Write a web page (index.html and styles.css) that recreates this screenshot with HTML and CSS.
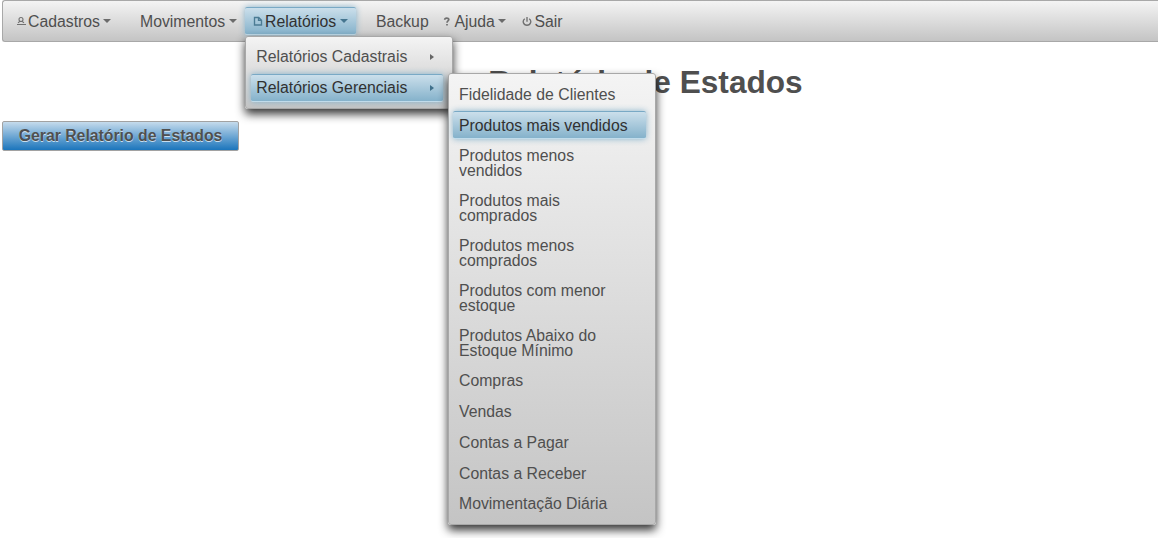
FILE: index.html
```html
<!DOCTYPE html>
<html lang="pt-BR">
<head>
<meta charset="utf-8">
<title>Relatório de Estados</title>
<link rel="stylesheet" href="styles.css">
</head>
<body>
<nav class="menubar">
  <a class="item cadastros"><svg class="icon" viewBox="0 0 10 10"><circle cx="5" cy="3.500" r="2"/><path d="M4 5.400L2 6.800M6 5.400L8 6.800M1 8.500h9"/></svg>Cadastros<i class="caret"></i></a>
  <a class="item movimentos">Movimentos<i class="caret"></i></a>
  <div class="dropdown">
    <a class="item relatorios active"><svg class="icon" viewBox="0 0 10 10"><path d="M1.500 1.500h4.200l2.800 2.700v4.800h-7zM5.500 1.500v2.900h3"/></svg>Relatórios<i class="caret"></i></a>
    <ul class="menu reports">
      <li><a>Relatórios Cadastrais<i class="arrow"></i></a></li>
      <li><a class="active">Relatórios Gerenciais<i class="arrow"></i></a>
        <ul class="menu managerial">
          <li><a>Fidelidade de Clientes</a></li>
          <li><a class="active">Produtos mais vendidos</a></li>
          <li class="double"><a>Produtos menos<br>vendidos</a></li>
          <li class="double"><a>Produtos mais<br>comprados</a></li>
          <li class="double"><a>Produtos menos<br>comprados</a></li>
          <li class="double"><a>Produtos com menor<br>estoque</a></li>
          <li class="double"><a>Produtos Abaixo do<br>Estoque Mínimo</a></li>
          <li class="lower"><a>Compras</a></li>
          <li class="lower"><a>Vendas</a></li>
          <li class="lower"><a>Contas a Pagar</a></li>
          <li class="lower"><a>Contas a Receber</a></li>
          <li class="last"><a>Movimentação Diária</a></li>
        </ul>
      </li>
    </ul>
  </div>
  <a class="item backup">Backup</a>
  <a class="item ajuda"><svg class="icon" viewBox="0 0 10 10"><path class="thick" d="M2.700 3.800C2.700 1.500 6.800 1.500 6.800 3.600C6.800 5 5 4.900 5 6.700M5 7.900v1.700"/></svg>Ajuda<i class="caret"></i></a>
  <a class="item sair"><svg class="icon" viewBox="0 0 10 10"><path d="M2.800 2.800C-.1 4.700 1.300 9.200 5 9.200s5.100-4.500 2.200-6.400M5 1v4.700"/></svg>Sair</a>
</nav>
<main class="content">
  <h1>Relatório de Estados</h1>
  <button class="generate">Gerar Relatório de Estados</button>
</main>
</body>
</html>
```
FILE: styles.css
```css
* { box-sizing: border-box; }
html { overflow: hidden; }
body {
  margin: 0;
  width: 1158px;
  height: 538px;
  overflow: hidden;
  background: #fff;
  font: 15.8px/15px "Liberation Sans", Arial, sans-serif;
  color: #4f4f4f;
}
.menubar {
  display: flex;
  align-items: flex-start;
  height: 42px;
  margin-left: 2px;
  padding: 6px 0 0 5px;
  border: 1px solid #a8a8a8;
  border-right: 0;
  border-radius: 3px 0 0 3px;
  background: linear-gradient(#f4f4f4, #c4c4c4);
}
.item {
  display: flex;
  align-items: center;
  height: 28px;
  padding-left: 8px;
  white-space: nowrap;
}
.cadastros { width: 124px; }
.movimentos { width: 113px; }
.relatorios { width: 111px; }
.backup { margin-left: 12px; width: 66px; }
.ajuda { width: 80px; }
.icon {
  flex: none;
  width: 10px;
  height: 10px;
  margin-right: 2px;
  fill: none;
  stroke: #707070;
  stroke-width: 1.35;
}
.cadastros .icon { stroke-width: 1.1; }
.ajuda .icon { margin-right: 2.5px; }
.sair .icon { margin-right: 2.5px; }
.thick { stroke-width: 1.7; }
.active .icon { stroke: #4b7b94; }
.caret {
  margin-left: 3px;
  border: 4px solid transparent;
  border-top-color: #6b6b6b;
  border-bottom: 0;
}
.movimentos .caret, .relatorios .caret { margin-left: 4px; }
.active .caret { border-top-color: #45758f; }
.active {
  color: #313131;
  background: linear-gradient(#cbdfeb, #85b2cb);
  border-top: 1px solid #79a9c5;
  border-bottom: 1px solid #c1dceb;
  border-radius: 2px;
  box-shadow: 0 0 6px #85b2cb;
}
.dropdown { position: relative; }
.menu {
  position: absolute;
  width: 208px;
  margin: 0;
  padding: 4.8px 9px 4.8px 4px;
  list-style: none;
  border: 1px solid #a8a8a8;
  border-radius: 3px;
  background: linear-gradient(#f4f4f4, #c4c4c4);
  box-shadow: 0 5px 10px rgba(0, 0, 0, .8);
}
.reports {
  z-index: 2;
  left: 0;
  top: 29px;
  height: 73px;
  padding-top: 4.6px;
  padding-left: 5px;
}
.managerial { z-index: 3; left: 202px; top: 36px; height: 452px; }
.menu li {
  display: flex;
  align-items: center;
  height: 30.8px;
}
.menu .double { height: 45px; }
.menu a {
  display: flex;
  align-items: center;
  width: 100%;
  height: 28px;
  padding-left: 6px;
}
.reports > li > a { padding-left: 5.3px; }
.managerial > li:not(.double) > a { padding-top: 1px; }
.managerial > .lower:not(.double) > a { padding-top: .2px; }
.managerial > .last:not(.double) > a { padding: 0 0 1px 6px; }
.menu .double a { height: 43px; }
.arrow {
  margin: 0 9px 0 auto;
  border: 3.5px solid transparent;
  border-left: 4px solid #666;
  border-right: 0;
}
.active .arrow { border-left-color: #3f6f8a; }
.content { margin-left: 2px; }
h1 {
  margin: 22px 0 21px;
  padding-left: 131px;
  font: bold 31.6px/36px "Liberation Sans", Arial, sans-serif;
  text-align: center;
}
.generate {
  display: block;
  width: 237px;
  height: 30px;
  padding: 0 0 1px;
  border: 1px solid #a2a2a2;
  border-radius: 2px;
  background: linear-gradient(#c5dbec, #1b75bc);
  color: #4f4f4f;
  font: bold 15.8px/18px "Liberation Sans", Arial, sans-serif;
  text-shadow: 0 1px 0 rgba(255, 255, 255, .7);
}
```
